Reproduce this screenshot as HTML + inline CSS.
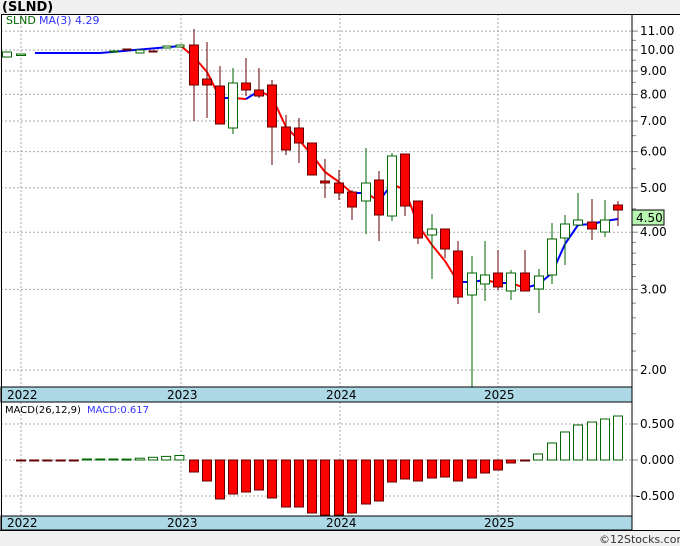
<!DOCTYPE html><html><head><meta charset="utf-8"><style>
body{margin:0;width:680px;height:546px;background:#f0f0f0;font-family:"Liberation Sans",Tahoma,sans-serif;overflow:hidden}
svg{position:absolute;left:0;top:0}
</style></head><body>
<svg id="s" width="680" height="546" xmlns="http://www.w3.org/2000/svg" font-family="Tahoma,'DejaVu Sans',sans-serif" font-size="11">
<rect x="1" y="14" width="679" height="516" fill="#fff"/>
<text x="2" y="11" font-weight="bold" font-size="13" fill="#000">(SLND)</text>
<g id="g"></g>
</svg>
<script>
const g=document.getElementById('g');let h='';
const Y=p=>370-198.8*Math.log(p/2);
[11,10,9,8,7,6,5,4,3,2].forEach(p=>{const y=Y(p).toFixed(1);h+=`<line x1="1" x2="632" y1="${y}" y2="${y}" stroke="#aaa" stroke-dasharray="2,2"/><line x1="632" x2="638" y1="${y}" y2="${y}" stroke="#888"/><text x="640" y="${+y+4}" font-size="12">${p.toFixed(2)}</text>`});
[2.2,2.4,2.6,2.8,3.2,3.4,3.6,3.8,4.5,5.5,6.5,7.5,8.5,9.5,10.5].forEach(p=>{const y=Y(p);h+=`<line x1="632" x2="636" y1="${y}" y2="${y}" stroke="#888"/>`});
[21,181,340,498].forEach(x=>{h+=`<line x1="${x}" x2="${x}" y1="14" y2="530" stroke="#aaa" stroke-dasharray="2,2"/>`});
[460,424,496].forEach(y=>{h+=`<line x1="1" x2="632" y1="${y}" y2="${y}" stroke="#aaa" stroke-dasharray="2,2"/><line x1="632" x2="638" y1="${y}" y2="${y}" stroke="#888"/>`});
h+=`<text x="640" y="428" font-size="12">0.500</text><text x="640" y="464" font-size="12">0.000</text><text x="636" y="500" font-size="12">-0.500</text>`;
const c=[[7,52,57,52,57,0],[21,54,55,54,55,0],[194,45,85,29,121,1],[207,79,85,42,118,1],[220,86,124,66,124,1],[233,83,128,68,134,0],[246,83,90,58,96,1],[259,90,96,68,98,1],[272,85,127,80,165,1],[286,127,150,115,155,1],[299,128,143,118,163,1],[312,143,175,143,175,1],[325,181,183,159,198,1],[339,183,193,170,200,1],[352,192,207,190,220,1],[366,183,201,148,234,0],[379,180,215,171,241,1],[392,156,216,153,221,0],[405,154,206,154,216,1],[418,201,238,201,244,1],[432,229,235,214,279,0],[445,229,249,229,258,1],[458,251,297,241,304,1],[472,273,295,256,387,0],[485,275,284,241,301,0],[498,273,287,250,290,1],[511,273,291,270,300,0],[525,273,291,250,291,1],[539,276,289,269,313,0],[552,239,275,223,284,0],[565,224,238,215,265,0],[578,220,225,193,225,0],[592,222,229,199,240,1],[605,220,232,200,237,0],[618,205,210,201,226,1]];
const early=[[140,50,53,0],[153,51,52,1],[167,46,48,0],[180,45,47,0],[114,51,52,0],[127,49,50,1]];
const ma=[[35,53],[100,53],[181,46],[194,57],[207,72],[220,98],[233,98],[246,99],[259,91],[272,97],[286,127],[299,140],[312,155],[325,172],[339,182],[352,193],[366,193],[379,201],[392,184],[405,190],[418,225],[432,245],[445,261],[458,282],[472,282],[485,280],[498,283],[511,283],[525,288],[539,284],[552,273],[565,244],[578,225],[592,224],[605,221],[618,219]];
for(let i=1;i<ma.length;i++){const [a,b]=ma[i-1],[x,y]=ma[i];h+=`<line x1="${a}" y1="${b}" x2="${x}" y2="${y}" stroke="${y<=b?'#00f':'#f00'}" stroke-width="2"/>`}
early.forEach(([x,t,b,r])=>{h+=`<rect x="${x-4}" y="${t}" width="8" height="${b-t}" fill="${r?'#600':'#fff'}" stroke="${r?'#600':'#060'}"/>`});
c.forEach(([x,t,b,wt,wb,r])=>{const col=r?'#600':'#060';h+=`<line x1="${x}" x2="${x}" y1="${wt}" y2="${wb}" stroke="${col}"/><rect x="${x-4.5}" y="${t}" width="9" height="${Math.max(b-t,1.5)}" fill="${r?'#f00':'#fff'}" stroke="${col}"/>`});
const m=[[194,472],[207,481],[220,499],[233,494],[246,492],[259,490],[272,498],[286,507],[299,507],[312,513],[325,515],[339,515],[352,513],[366,504],[379,501],[392,482],[405,479],[418,481],[432,478],[445,477],[458,481],[472,478],[485,473],[498,470],[511,463],[525,461],[538,454],[552,443],[565,432],[578,425],[592,422],[605,419],[618,416]];
for(let i=0;i<13;i++){const x=21+i*13.2;m.push([x,i<5?461:(i<8?459:460-(i-7)*0.9)])}
m.forEach(([x,y])=>{const neg=y>460;h+=`<rect x="${x-4.5}" y="${Math.min(y,460)}" width="9" height="${Math.max(Math.abs(y-460),1)}" fill="${neg?'#f00':'#fff'}" stroke="${neg?'#600':'#060'}"/>`});
[[387,402],[516,530]].forEach(([a,b])=>{h+=`<rect x="1" y="${a}" width="631" height="${b-a}" fill="#add8e6" stroke="#000"/>`;[[21,'2022'],[181,'2023'],[340,'2024'],[498,'2025']].forEach(([x,t])=>{h+=`<text x="${x-14}" y="${b-3}" font-size="12">${t}</text>`})});
h+=`<line x1="1" x2="680" y1="14.5" y2="14.5" stroke="#000"/><line x1="632" x2="632" y1="14" y2="530" stroke="#000"/><line x1="0" x2="680" y1="530.5" y2="530.5" stroke="#000"/><line x1="1.5" x2="1.5" y1="14" y2="530" stroke="#000"/>`;
h+=`<text x="6" y="24" fill="#060">SLND</text><text x="39" y="24" fill="#33f">MA(3)</text><text x="75" y="24" fill="#33f">4.29</text>`;
h+=`<text x="5" y="413" font-size="10">MACD(26,12,9)</text><text x="87" y="413" font-size="10" fill="#33f">MACD:0.617</text>`;
h+=`<rect x="632" y="210" width="32" height="15" fill="#b8f5b0" stroke="#000"/><text x="636" y="222" font-size="12">4.50</text>`;
h+=`<text x="599" y="543" font-size="11" fill="#333">©12Stocks.com</text>`;
g.innerHTML=h;
</script>
</body></html>
